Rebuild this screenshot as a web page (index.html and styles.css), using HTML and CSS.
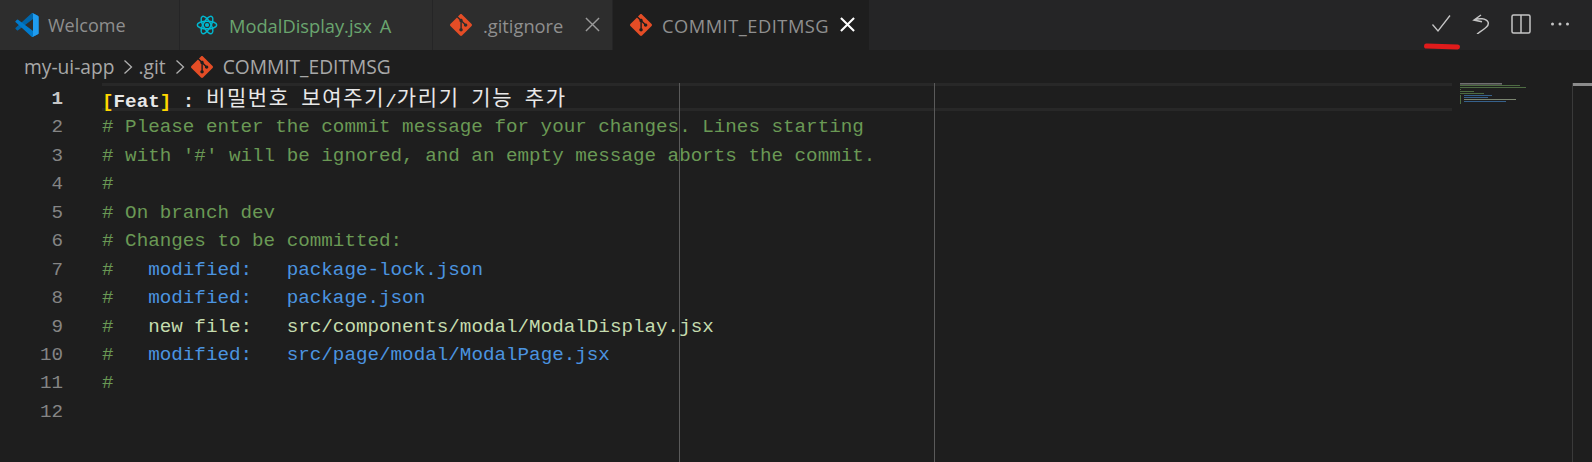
FILE: index.html
```html
<!DOCTYPE html>
<html lang="en">
<head>
<meta charset="utf-8">
<title>COMMIT_EDITMSG</title>
<link rel="stylesheet" href="styles.css">
</head>
<body>
<svg class="defs" width="0" height="0" aria-hidden="true">
  <symbol id="git" viewBox="0 0 24 24"><path fill="#e44d26" d="M23.546 10.93L13.067.452c-.604-.603-1.582-.603-2.188 0L8.708 2.627l2.76 2.76c.645-.215 1.379-.07 1.889.441.516.515.658 1.258.438 1.9l2.658 2.66c.645-.223 1.387-.078 1.9.435.721.72.721 1.884 0 2.604-.719.719-1.881.719-2.6 0-.539-.541-.674-1.337-.404-1.996L12.86 8.955v6.525c.176.086.342.203.488.348.713.721.713 1.883 0 2.6-.719.721-1.889.721-2.609 0-.719-.719-.719-1.879 0-2.598.182-.18.387-.316.605-.406V8.835c-.217-.091-.424-.222-.6-.401-.545-.545-.676-1.342-.396-2.009L7.636 3.7.45 10.881c-.6.605-.6 1.584 0 2.189l10.48 10.477c.604.604 1.582.604 2.186 0l10.43-10.43c.605-.603.605-1.582 0-2.187"/></symbol>
</svg>
<div class="window">
  <header class="titlebar">
    <div class="tabs">
      <div class="tab tab-welcome">
        <svg class="tab-icon" viewBox="0 0 100 100"><path fill="#0065a9" d="M96 11 75 1a6 6 0 0 0-7 1L3 61a4 4 0 0 0 0 6l5 5a4 4 0 0 0 5 0L96 9z"/><path fill="#007acc" d="M96 89 75 99a6 6 0 0 1-7-1L3 39a4 4 0 0 1 0-6l5-5a4 4 0 0 1 5 0L96 91z"/><path fill="#1f9cf0" d="M75 99a6 6 0 0 1-7-1c2 2 7 1 7-2V4c0-3-5-4-7-2a6 6 0 0 1 7-1l20 10a6 6 0 0 1 4 5v68a6 6 0 0 1-4 5z"/></svg>
        <span class="tab-label">Welcome</span>
      </div>
      <div class="tab tab-modal">
        <svg class="tab-icon react" viewBox="0 0 24 24"><circle cx="12" cy="12" r="2.3" fill="#00b8d0"/><g fill="none" stroke="#00b8d0" stroke-width="1.6"><ellipse cx="12" cy="12" rx="10.6" ry="4.2"/><ellipse cx="12" cy="12" rx="10.6" ry="4.2" transform="rotate(60 12 12)"/><ellipse cx="12" cy="12" rx="10.6" ry="4.2" transform="rotate(120 12 12)"/></g></svg>
        <span class="tab-label added">ModalDisplay.jsx</span>
        <span class="badge added">A</span>
      </div>
      <div class="tab tab-ignore">
        <svg class="tab-icon"><use href="#git"/></svg>
        <span class="tab-label">.gitignore</span>
        <svg class="close" viewBox="0 0 16 16"><path d="M1 1l14 14M15 1 1 15" stroke="#9a9a9a" stroke-width="1.500" fill="none"/></svg>
      </div>
      <div class="tab tab-active">
        <svg class="tab-icon"><use href="#git"/></svg>
        <span class="tab-label wide">COMMIT_EDITMSG</span>
        <svg class="close" viewBox="0 0 16 16"><path d="M1 1l14 14M15 1 1 15" stroke="#fff" stroke-width="2.200" fill="none"/></svg>
      </div>
    </div>
    <div class="actions">
      <span class="action action-commit"><svg viewBox="0 0 20 20"><path d="M1.500 10.500 7 17 19 1.500" fill="none" stroke="#c5c5c5" stroke-width="1.300"/></svg><i class="scribble"></i></span>
      <span class="action"><svg viewBox="0 0 20 20"><path d="M9 1 2 6l8 1.700M2 6C7 4 14 4 16 8c1.500 3.500-2 6-11 12" fill="none" stroke="#c5c5c5" stroke-width="1.500"/></svg></span>
      <span class="action"><svg viewBox="0 0 20 20"><rect x="1" y="1" width="18" height="18" rx="1.500" fill="none" stroke="#c5c5c5" stroke-width="1.500"/><path d="M10 1v18" stroke="#c5c5c5" stroke-width="1.500"/></svg></span>
      <span class="action"><svg viewBox="0 0 20 20"><circle cx="2.500" cy="10" r="1.500" fill="#c5c5c5"/><circle cx="10" cy="10" r="1.500" fill="#c5c5c5"/><circle cx="17.500" cy="10" r="1.500" fill="#c5c5c5"/></svg></span>
    </div>
  </header>
  <nav class="breadcrumb">
    <span>my-ui-app</span>
    <svg class="chev" viewBox="0 0 10 16"><path d="M1.500 1.500 8.500 8l-7 6.500" fill="none" stroke="#b0b0b0" stroke-width="1.300"/></svg>
    <span>.git</span>
    <svg class="chev" viewBox="0 0 10 16"><path d="M1.500 1.500 8.500 8l-7 6.500" fill="none" stroke="#b0b0b0" stroke-width="1.300"/></svg>
    <svg class="crumb-icon"><use href="#git"/></svg>
    <span class="crumb-file">COMMIT_EDITMSG</span>
  </nav>
  <main class="editor">
    <div class="lines">
      <div class="row current"><span class="num">1</span><code class="text"><span class="strong"><span class="bracket">[</span>Feat<span class="bracket">]</span> :</span> <span class="ko">비밀번호</span> <span class="ko">보여주기</span>/<span class="ko">가리기</span> <span class="ko">기능</span> <span class="ko">추가</span></code></div>
      <div class="row"><span class="num">2</span><code class="text c"># Please enter the commit message for your changes. Lines starting</code></div>
      <div class="row"><span class="num">3</span><code class="text c"># with '#' will be ignored, and an empty message aborts the commit.</code></div>
      <div class="row"><span class="num">4</span><code class="text c">#</code></div>
      <div class="row"><span class="num">5</span><code class="text c"># On branch dev</code></div>
      <div class="row"><span class="num">6</span><code class="text c"># Changes to be committed:</code></div>
      <div class="row"><span class="num">7</span><code class="text"><span class="c">#</span>   <span class="m">modified:   package-lock.json</span></code></div>
      <div class="row"><span class="num">8</span><code class="text"><span class="c">#</span>   <span class="m">modified:   package.json</span></code></div>
      <div class="row"><span class="num">9</span><code class="text"><span class="c">#</span>   <span class="n">new file:   src/components/modal/ModalDisplay.jsx</span></code></div>
      <div class="row"><span class="num">10</span><code class="text"><span class="c">#</span>   <span class="m">modified:   src/page/modal/ModalPage.jsx</span></code></div>
      <div class="row"><span class="num">11</span><code class="text c">#</code></div>
      <div class="row"><span class="num">12</span><code class="text"></code></div>
    </div>
    <i class="ruler ruler-a"></i>
    <i class="ruler ruler-b"></i>
    <svg class="minimap" viewBox="0 0 66 24">
      <g fill="#8a8a8a"><rect x="0" y="0" width="42" height="1.600"/></g>
      <g fill="#5f8750"><rect x="0" y="2" width="60" height="1"/><rect x="0" y="4" width="66" height="1"/><rect x="0" y="6" width="1" height="1"/><rect x="0" y="8" width="14" height="1"/><rect x="0" y="10" width="24" height="1"/><rect x="0" y="12" width="1" height="9"/></g>
      <g fill="#3f78b0"><rect x="4" y="12" width="28" height="1"/><rect x="4" y="14" width="24" height="1"/><rect x="4" y="18" width="42" height="1"/></g>
      <g fill="#9aa88c"><rect x="4" y="16" width="52" height="1"/></g>
    </svg>
    <div class="overview"><i class="overview-cursor"></i></div>
  </main>
</div>
</body>
</html>
```
FILE: styles.css
```css
* { box-sizing: border-box; }
html, body { margin: 0; height: 100%; }
body { background: #1e1e1e; overflow: hidden; }
.defs { position: absolute; }
.window { width: 1592px; height: 462px; display: flex; flex-direction: column; font-family: "Open Sans", "Noto Sans", sans-serif; }

.titlebar { height: 50px; background: #252526; display: flex; justify-content: space-between; flex: none; }
.tabs { display: flex; }
.tab { height: 50px; display: flex; align-items: center; background: #2d2d2d; border-right: 1px solid #252526; font-size: 18.300px; color: #8f8f8f; }
.tab-welcome { width: 180px; padding-left: 15px; font-size: 18px; }
.tab-modal { width: 253px; padding-left: 16px; }
.tab-ignore { width: 180px; padding: 0 12px 0 17px; }
.tab-active { width: 256px; padding: 0 14px 0 17px; background: #1e1e1e; border-right: 0; }
.tab-icon { width: 22px; height: 22px; flex: none; margin-right: 11px; }
.tab-welcome .tab-icon { width: 24px; height: 24px; margin-right: 9px; }
.tab-active .tab-icon { margin-right: 10px; }
.wide { letter-spacing: 0.500px; }
.added { color: #6aa56f; }
.badge { margin-left: 8px; }
.close { width: 15px; height: 15px; margin-left: auto; flex: none; margin-bottom: 2px; }

.actions { display: flex; align-items: center; gap: 19px; padding: 0 22px 2px 0; }
.action { position: relative; width: 20px; height: 20px; display: block; }
.action-commit { margin-right: 2px; }
.action svg { width: 20px; height: 20px; display: block; }
.scribble { position: absolute; left: -7px; top: 30px; width: 36px; height: 5px; background: #e01b1b; border-radius: 3px; transform: rotate(1.500deg); }

.breadcrumb { height: 33px; flex: none; display: flex; align-items: center; padding-left: 24px; font-size: 19.200px; color: #a8a8a8; }
.chev { width: 10px; height: 16px; margin: 0 5px 0 9px; flex: none; }
.crumb-icon { width: 22px; height: 22px; margin: 0 10px 0 1px; flex: none; }

.editor { position: relative; flex: 1; font-family: "Liberation Mono", "Noto Sans CJK KR", monospace; font-size: 19.240px; }
.lines { display: flex; flex-direction: column; }
.row { display: flex; height: 28.450px; line-height: 32px; white-space: pre; }
.num { width: 63px; text-align: right; color: #858585; flex: none; }
.text { margin-left: 39px; flex: 1; font: inherit; color: #d4d4d4; }
.current .num { color: #c6c6c6; font-weight: 700; }
.current .text { margin-right: 140px; border: solid #282828; border-width: 3px 0; line-height: 21px; color: #e8e8e8; }
.strong { font-weight: 700; }
.bracket { color: #ffd700; }
.ko { display: inline-block; font-family: "Noto Sans CJK KR", sans-serif; font-size: 21px; line-height: 20px; font-weight: 400; letter-spacing: 1.650px; vertical-align: 2px; }
.c { color: #6a9955; }
.m { color: #4b94e0; }
.n { color: #c5dcae; }

.ruler { position: absolute; top: 0; bottom: 0; width: 1px; background: #5a5a5a; }
.ruler-a { left: 679px; }
.ruler-b { left: 934px; }
.minimap { position: absolute; left: 1460px; top: 0; width: 66px; height: 24px; opacity: 0.750; }
.overview { position: absolute; left: 1572px; top: 0; bottom: 0; width: 20px; border-left: 1px solid #3a3a3a; }
.overview-cursor { display: block; height: 3px; background: #8c8c8c; }
```
